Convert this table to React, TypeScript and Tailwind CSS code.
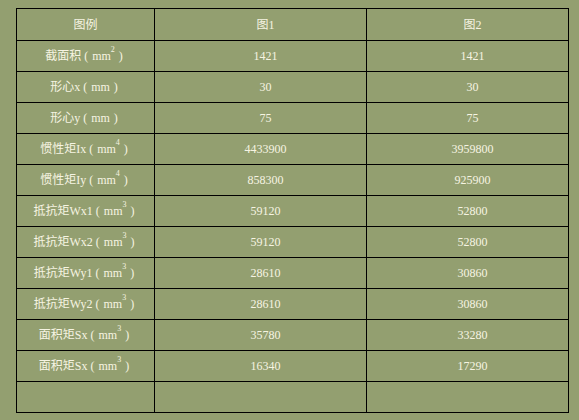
import React from "react";

const L = () => <span className="inline-block ml-[3px] mr-[4px]">(</span>;
const R = () => <span className="inline-block ml-[4px] mr-[3px]">)</span>;
const Sup = ({ n }: { n: string }) => (
  <sup className="text-[8px] align-[4px]">{n}</sup>
);

const rows: [React.ReactNode, string, string][] = [
  [<>截面积<L />mm<Sup n="2" /><R /></>, "1421", "1421"],
  [<>形心x<L />mm<R /></>, "30", "30"],
  [<>形心y<L />mm<R /></>, "75", "75"],
  [<>惯性矩Ix<L />mm<Sup n="4" /><R /></>, "4433900", "3959800"],
  [<>惯性矩Iy<L />mm<Sup n="4" /><R /></>, "858300", "925900"],
  [<>抵抗矩Wx1<L />mm<Sup n="3" /><R /></>, "59120", "52800"],
  [<>抵抗矩Wx2<L />mm<Sup n="3" /><R /></>, "59120", "52800"],
  [<>抵抗矩Wy1<L />mm<Sup n="3" /><R /></>, "28610", "30860"],
  [<>抵抗矩Wy2<L />mm<Sup n="3" /><R /></>, "28610", "30860"],
  [<>面积矩Sx<L />mm<Sup n="3" /><R /></>, "35780", "33280"],
  [<>面积矩Sx<L />mm<Sup n="3" /><R /></>, "16340", "17290"],
  [<></>, "", ""],
];

export default function App() {
  return (
    <div
      className="w-[579px] h-[420px] bg-[#939f70] pt-[8px] pl-[16px] text-[12px] text-[#f6f4e2]"
      style={{ fontFamily: '"Liberation Serif", "Noto Sans CJK SC", serif' }}
    >
      <table className="border-collapse border border-black table-fixed w-[552px]">
        <colgroup>
          <col className="w-[138px]" />
          <col className="w-[212px]" />
          <col className="w-[202px]" />
        </colgroup>
        <tbody>
          <tr className="h-[32px]">
            <td className="border border-black text-center">图例</td>
            <td className="border border-black text-center pl-[10px]">图1</td>
            <td className="border border-black text-center pl-[10px]">图2</td>
          </tr>
          {rows.map((r, i) => (
            <tr key={i} className="h-[31px]">
              <td className="border border-black text-center whitespace-nowrap">{r[0]}</td>
              <td className="border border-black text-center pl-[10px]">{r[1]}</td>
              <td className="border border-black text-center pl-[10px]">{r[2]}</td>
            </tr>
          ))}
        </tbody>
      </table>
    </div>
  );
}
